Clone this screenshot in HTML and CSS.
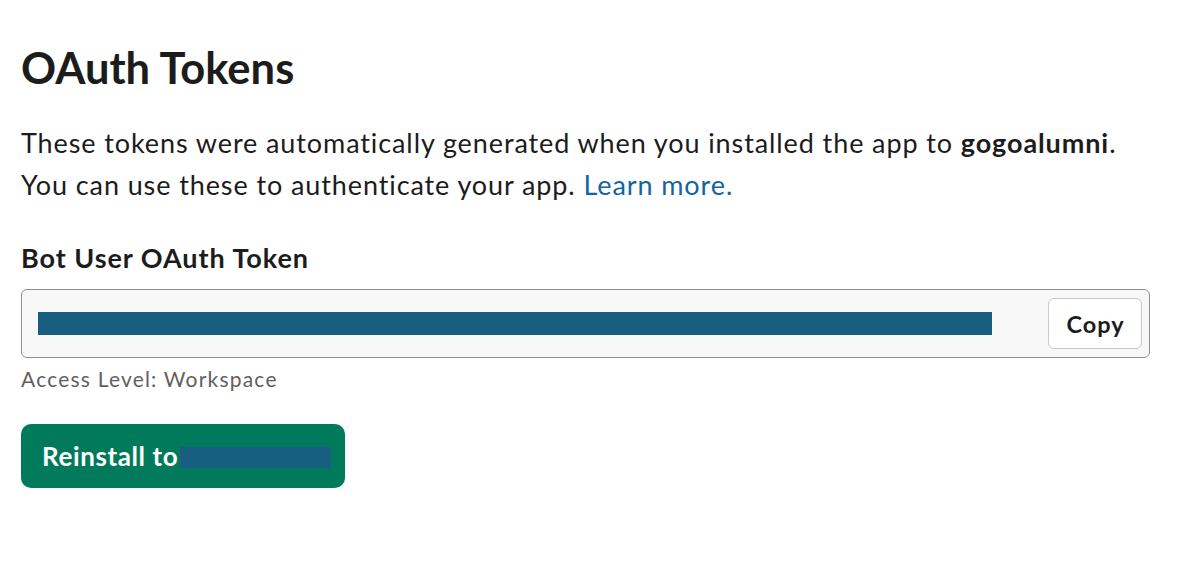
FILE: index.html
```html
<!DOCTYPE html>
<html>
<head>
<meta charset="utf-8">
<link rel="stylesheet" href="styles.css">
</head>
<body>
<main class="page">
  <h1 class="title">OAuth Tokens</h1>
  <p class="intro">These tokens were automatically generated when you installed the app to <b>gogoalumni</b>.<br>You can use these to authenticate your app. <a class="link" href="#">Learn more.</a></p>
  <div class="field">
    <label class="label">Bot User OAuth Token</label>
    <div class="token-box">
      <div class="token-value"><span class="redact redact-token"></span></div>
      <button class="copy-btn">Copy</button>
    </div>
    <div class="hint">Access Level: Workspace</div>
  </div>
  <button class="reinstall"><span class="btn-text">Reinstall to</span><span class="redact redact-ws"></span></button>
</main>
</body>
</html>
```

FILE: styles.css
```css
* { box-sizing: border-box; }
html, body { margin: 0; padding: 0; background: #fff; }
body {
  font-family: Lato, "Noto Sans", sans-serif;
  color: #1d1c1d;
}
.page {
  padding: 36px 0 0 21px;
  width: 1183px;
}
.title {
  margin: 0;
  font-size: 43.5px;
  font-weight: 700;
  line-height: 62px;
}
.intro {
  margin: 24px 0 0;
  font-size: 27px;
  letter-spacing: 0.9px;
  line-height: 42px;
}
.intro b { font-weight: 700; }
.link { color: #1264a3; text-decoration: none; }
.field { margin-top: 35px; }
.label {
  display: block;
  font-size: 27px;
  letter-spacing: 0.95px;
  font-weight: 700;
  line-height: 34px;
}
.token-box {
  margin-top: 14px;
  width: 1129px;
  height: 69px;
  border: 1.5px solid #8f8f8f;
  border-radius: 6px;
  background: #f8f8f8;
  display: flex;
  align-items: center;
  padding: 0 7px 0 16px;
}
.token-value { flex: 1; display: flex; align-items: center; }
.redact { display: inline-block; background: #175e80; }
.redact-token { width: 954px; height: 23px; }
.copy-btn {
  width: 94px;
  height: 51px;
  background: #fff;
  border: 1.5px solid #c9c9c9;
  border-radius: 6px;
  font-family: Lato, sans-serif;
  font-size: 23.5px;
  letter-spacing: 1px;
  font-weight: 700;
  color: #1d1c1d;
  padding: 0 0 0 1px;
}
.hint {
  margin-top: 8px;
  font-size: 21px;
  letter-spacing: 1.2px;
  color: #616061;
  line-height: 26px;
}
.reinstall {
  margin-top: 32px;
  width: 324px;
  height: 64px;
  background: #007a5a;
  border: none;
  border-radius: 10px;
  color: #fff;
  font-family: Lato, sans-serif;
  font-size: 26px;
  letter-spacing: 0.6px;
  font-weight: 700;
  text-align: left;
  padding: 0 0 0 21px;
  display: flex;
  align-items: center;
  gap: 2px;
}
.redact-ws { width: 151px; height: 21px; margin-top: 2px; }
```
